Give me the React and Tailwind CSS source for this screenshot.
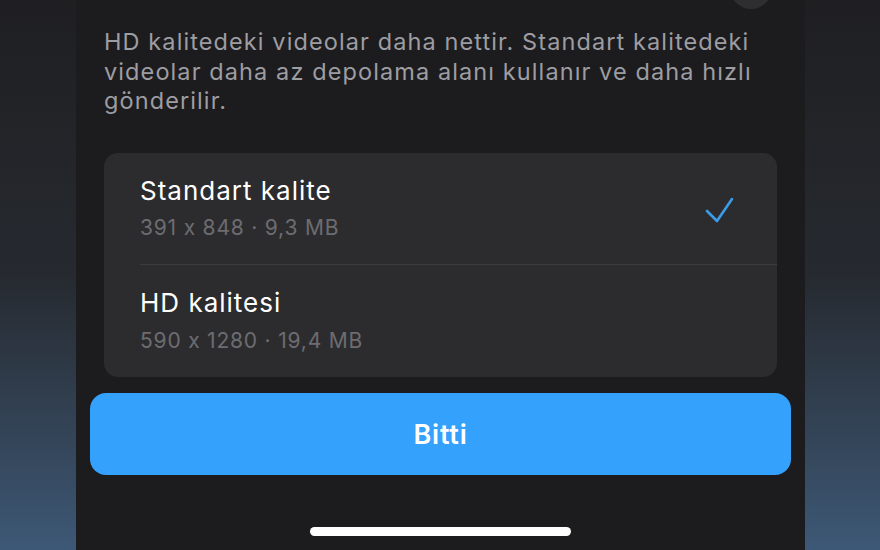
export default function App() {
  return (
    <div
      className="w-[880px] h-[550px] overflow-hidden bg-linear-to-b from-[#1f1f22] via-[#262a30] to-[#3d5876] pl-[76px] [font-feature-settings:'calt'_0]"
      style={{ fontFamily: 'Inter, "Noto Sans", sans-serif' }}
    >
      <div className="relative w-[729px] h-[550px] bg-[#1c1c1e] overflow-hidden flex flex-col">
        <div className="absolute left-[654px] top-[-33px] w-[42px] h-[42px] rounded-full bg-[#2e2e31]" />

        <div className="pl-[28px] pt-[27px] text-[23.5px] leading-[29.5px] text-[#9d9da2] tracking-[1.1px]">
          <div className="whitespace-nowrap">HD kalitedeki videolar daha nettir. Standart kalitedeki</div>
          <div className="whitespace-nowrap">videolar daha az depolama alanı kullanır ve daha hızlı</div>
          <div className="whitespace-nowrap">gönderilir.</div>
        </div>

        <div className="mt-[37.5px] ml-[28px] w-[673px] rounded-[14px] bg-[#2c2c2e] flex flex-col">
          <div className="h-[111px] flex items-center pl-[36px] pr-[42px]">
            <div className="flex-1 flex flex-col">
              <div className="text-[26px] leading-[30px] text-white tracking-[1px]">Standart kalite</div>
              <div className="mt-[9px] text-[21px] leading-[26px] text-[#6c6c71] tracking-[0.8px]">391 x 848 · 9,3 MB</div>
            </div>
            <svg width="31" height="28" viewBox="0 0 31 28" fill="none" className="mt-[3px]">
              <path d="M3 15 L13 25 L28 3" stroke="#3b9ce8" strokeWidth="2.6" strokeLinecap="round" strokeLinejoin="round" />
            </svg>
          </div>
          <div className="ml-[36px] h-px bg-[#3c3c3f]" />
          <div className="h-[112px] flex items-center pl-[36px] pr-[42px]">
            <div className="flex-1 flex flex-col">
              <div className="text-[26px] leading-[30px] text-white tracking-[1px]">HD kalitesi</div>
              <div className="mt-[10px] text-[21px] leading-[26px] text-[#6c6c71] tracking-[0.8px]">590 x 1280 · 19,4 MB</div>
            </div>
          </div>
        </div>

        <div className="mt-[16px] ml-[14px] w-[701px] h-[82px] rounded-[16px] bg-[#34a1fd] flex items-center justify-center">
          <span className="text-[27px] font-semibold text-white leading-none tracking-[0.8px]">Bitti</span>
        </div>

        <div className="mt-[52px] self-center w-[261px] h-[9px] rounded-full bg-white" />
      </div>
    </div>
  );
}
